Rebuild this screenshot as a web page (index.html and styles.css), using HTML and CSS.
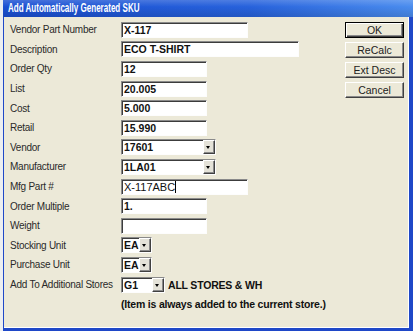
FILE: index.html
```html
<!DOCTYPE html>
<html lang="en">
<head>
    <meta charset="UTF-8">
    <title>Add Automatically Generated SKU</title>
    <link rel="stylesheet" href="styles.css">
</head>
<body>
    <div class="window">
        <div class="titlebar"><span class="title">Add Automatically Generated SKU</span></div>
        <div class="client">
            <div class="form">
                <div class="label">Vendor Part Number</div>
                <div class="cell"><div class="field w127">X-117</div></div>

                <div class="label">Description</div>
                <div class="cell"><div class="field w178">ECO T-SHIRT</div></div>

                <div class="label">Order Qty</div>
                <div class="cell"><div class="field w86">12</div></div>

                <div class="label">List</div>
                <div class="cell"><div class="field w86">20.005</div></div>

                <div class="label">Cost</div>
                <div class="cell"><div class="field w86">5.000</div></div>

                <div class="label">Retail</div>
                <div class="cell"><div class="field w86">15.990</div></div>

                <div class="label">Vendor</div>
                <div class="cell">
                    <div class="combo w95"><span class="combo-text">17601</span><span class="drop"></span></div>
                </div>

                <div class="label">Manufacturer</div>
                <div class="cell">
                    <div class="combo w95"><span class="combo-text">1LA01</span><span class="drop"></span></div>
                </div>

                <div class="label">Mfg Part #</div>
                <div class="cell"><div class="field w127 plain">X-117ABC<span class="caret"></span></div></div>

                <div class="label">Order Multiple</div>
                <div class="cell"><div class="field w86">1.</div></div>

                <div class="label">Weight</div>
                <div class="cell"><div class="field w86"></div></div>

                <div class="label">Stocking Unit</div>
                <div class="cell">
                    <div class="combo w31"><span class="combo-text">EA</span><span class="drop"></span></div>
                </div>

                <div class="label">Purchase Unit</div>
                <div class="cell">
                    <div class="combo w31"><span class="combo-text">EA</span><span class="drop"></span></div>
                </div>

                <div class="label">Add To Additional Stores</div>
                <div class="cell">
                    <div class="combo w44"><span class="combo-text">G1</span><span class="drop"></span></div>
                    <span class="note">ALL STORES &amp; WH</span>
                </div>

                <div class="label"></div>
                <div class="cell"><span class="note">(Item is always added to the current store.)</span></div>
            </div>

            <div class="buttons">
                <button class="btn default">OK</button>
                <button class="btn">ReCalc</button>
                <button class="btn">Ext Desc</button>
                <button class="btn">Cancel</button>
            </div>
        </div>
    </div>
</body>
</html>
```

FILE: styles.css
```css
body {
    margin: 0;
    background: #eceef1;
    font-family: "Liberation Sans", Arial, sans-serif;
}
.window {
    margin-left: 3px;
    width: 410px;
    height: 331px;
    box-sizing: border-box;
    background: #1f48c8;
    padding: 0 4px 3px 1px;
    display: flex;
    flex-direction: column;
}
.titlebar {
    height: 17px;
    margin: 0 -4px 0 -1px;
    padding-left: 5px;
    background: linear-gradient(to bottom, rgba(255,255,255,0.18), rgba(255,255,255,0) 40%, rgba(0,0,0,0.12)),
                linear-gradient(to right, #1a4fd2, #2762dc 60%, #4a8cee);
    color: #fff;
    font-size: 12px;
    font-weight: bold;
    line-height: 17px;
    white-space: nowrap;
}
/* the caption font of the dialog is much narrower than Arial */
.title {
    display: inline-block;
    transform: scaleX(0.67);
    transform-origin: left center;
}
.client {
    flex: 1;
    background: #ece9d8;
    border-right: 1px solid #fff;
    border-bottom: 1px solid #fff;
    display: flex;
}
.form {
    display: grid;
    grid-template-columns: 111px 1fr;
    grid-auto-rows: 19.6px;
    align-items: center;
    padding: 3px 0 0 6px;
    flex: 1;
}
.label {
    font-size: 10px;
    letter-spacing: -0.25px;
    color: #2a2a2a;
    white-space: nowrap;
}
.cell {
    display: flex;
    align-items: center;
    gap: 3px;
}
.field, .combo {
    height: 16px;
    box-sizing: border-box;
    background: #fff;
    border: 1px solid;
    border-color: #8a8a8a #fdfdfd #fdfdfd #8a8a8a;
    box-shadow: inset 1px 1px 0 #3c3c3c;
}
.field {
    padding-left: 2px;
    font-size: 10.5px;
    font-weight: bold;
    line-height: 14px;
    color: #111;
    white-space: nowrap;
}
.field.plain {
    font-weight: normal;
    font-size: 11px;
}
.caret {
    display: inline-block;
    width: 1px;
    height: 12px;
    background: #000;
    vertical-align: -2px;
}
.w127 { width: 127px; }
.w178 { width: 178px; }
.w86 { width: 86px; }
.w95 { width: 95px; }
.w31 { width: 31px; }
.w44 { width: 44px; }
.combo {
    display: flex;
}
.combo-text {
    flex: 1;
    padding-left: 2px;
    font-size: 10.5px;
    font-weight: bold;
    line-height: 14px;
    color: #111;
}
.drop {
    width: 12px;
    box-sizing: border-box;
    background: #e4e2d8;
    border: 1px solid;
    border-color: #fff #404040 #404040 #fff;
    box-shadow: inset -1px -1px 0 #8a8a8a;
    position: relative;
}
.drop::after {
    content: "";
    position: absolute;
    left: 2px;
    top: 5px;
    border-left: 2.5px solid transparent;
    border-right: 2.5px solid transparent;
    border-top: 3px solid #000;
}
.note {
    font-size: 10.5px;
    font-weight: bold;
    letter-spacing: -0.2px;
    color: #111;
    white-space: nowrap;
}
.buttons {
    display: flex;
    flex-direction: column;
    gap: 4px;
    padding: 5px 4px 0 0;
}
.btn {
    width: 59px;
    height: 16px;
    padding: 0;
    box-sizing: border-box;
    background: #ece9d8;
    border: 1px solid;
    border-color: #fff #404040 #404040 #fff;
    box-shadow: inset -1px -1px 0 #8a8a8a;
    font-family: "Liberation Sans", Arial, sans-serif;
    font-size: 10.5px;
    color: #222;
    line-height: 13px;
}
.btn.default {
    border-color: #000;
    box-shadow: inset 1px 1px 0 #fff, inset -1px -1px 0 #404040, inset -2px -2px 0 #8a8a8a;
}
```
